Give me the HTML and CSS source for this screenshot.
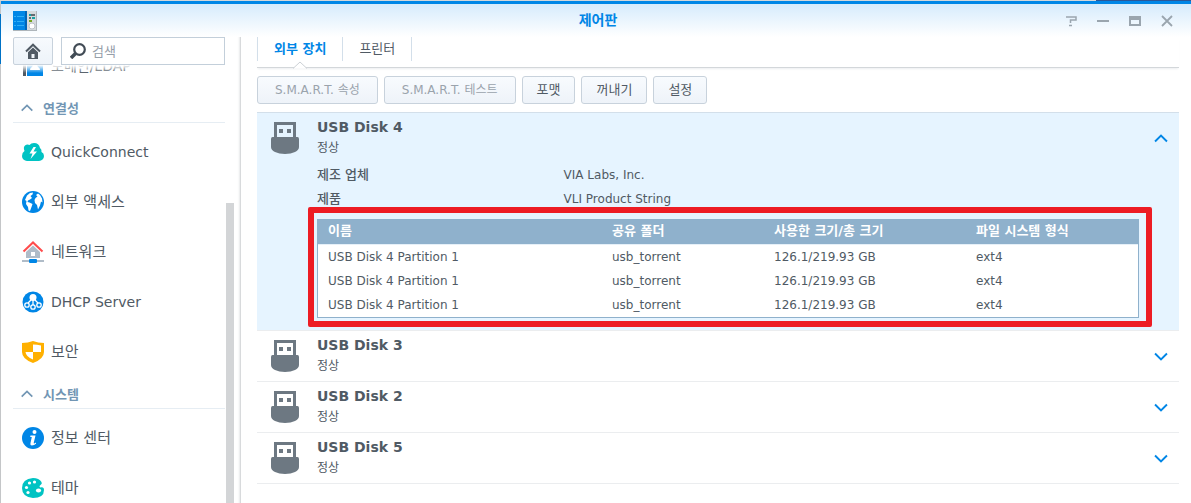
FILE: index.html
```
<!DOCTYPE html>
<html lang="ko">
<head>
    <meta charset="UTF-8">
    <meta name="viewport" content="width=device-width, initial-scale=1.0">
    <title>제어판</title>
    <link rel="stylesheet" href="styles.css">
</head>
<body>
    <!-- shared icons -->
    <svg class="sprite" aria-hidden="true">
        <symbol id="usb" viewBox="0 0 28 32">
            <path fill="#6d7882" fill-rule="evenodd" d="M3 0h22v15h1.500Q28 15 28 17v8q0 3-4 5-4 2-10 2T4 30Q0 28 0 25v-8q0-2 1.500-2H3zM6 3v12h16V3z"/>
            <path fill="#6d7882" d="M8 7h4v4H8zM16 7h4v4h-4z"/>
        </symbol>
        <symbol id="up" viewBox="0 0 12 8"><path fill="none" stroke="currentColor" stroke-width="1.700" d="M.7 6.700 6 1.500l5.300 5.200"/></symbol>
        <symbol id="down" viewBox="0 0 12 8"><path fill="none" stroke="currentColor" stroke-width="1.700" d="M.7 1.300 6 6.500l5.300-5.200"/></symbol>
    </svg>

    <div class="window">
        <header class="titlebar">
            <svg class="app-icon" width="24" height="20" viewBox="0 0 24 20">
                <path fill="#0086e6" d="M0 0h14v20H0z"/>
                <path fill="#0066b8" d="M12 0h2v20h-2z"/>
                <path fill="#d5dadd" d="M14 0h10v20H14z"/>
                <path fill="#aeb5ba" d="M0 19h24v1H0zM23 0h1v20h-1z"/>
                <path stroke="#30aef5" d="M1 5.500h2M4 5.500h7M1 10.500h2M4 10.500h7M1 14.500h2M4 14.500h7"/>
                <path stroke="#3e464d" stroke-width="1.500" d="M16 4h6M16 7h2M19 7h3M16 10h3"/>
                <path stroke="#7ab800" stroke-width="1.500" d="M16 10h3"/>
                <path stroke="#00b4b4" stroke-width="1.500" d="M16 4h2M19 7h3"/>
                <circle cx="19" cy="15" r="3" fill="#fff" stroke="#bcc3c8"/>
            </svg>
            <h1>제어판</h1>
            <div class="controls">
                <button type="button" aria-label="도움말"><svg width="12" height="12" viewBox="0 0 12 12"><path fill="none" stroke="#9aa5ae" stroke-width="1.500" d="M1 2h10v3H5.500v3M4 10.500h3"/></svg></button>
                <button type="button" aria-label="최소화"><svg width="12" height="12" viewBox="0 0 12 12"><path stroke="#9aa5ae" stroke-width="2" d="M0 6h12"/></svg></button>
                <button type="button" aria-label="최대화"><svg width="12" height="12" viewBox="0 0 12 12"><path fill="#9aa5ae" fill-rule="evenodd" d="M0 1h12v10H0zM2 5v4h8V5z"/></svg></button>
                <button type="button" aria-label="닫기"><svg width="12" height="12" viewBox="0 0 12 12"><path stroke="#9aa5ae" stroke-width="1.800" d="m1 1 10 10M11 1 1 11"/></svg></button>
            </div>
        </header>

        <div class="body">
            <aside class="sidebar">
                <div class="search-row">
                    <button type="button" class="home" aria-label="홈">
                        <svg width="16" height="16" viewBox="0 0 16 16"><path fill="none" stroke="#505a64" stroke-width="2" d="M1 8.500 8 1.700l7 6.800"/><path fill="#505a64" fill-rule="evenodd" d="m8 4.500 5 4.800V16H3V9.300zM6.500 11v4h3v-4z"/></svg>
                    </button>
                    <label class="search">
                        <svg width="16" height="16" viewBox="0 0 16 16"><circle cx="9.500" cy="6.500" r="5.300" fill="none" stroke="#414b55" stroke-width="2.200"/><path stroke="#414b55" stroke-width="3.500" d="m5.500 10.500-4.500 4.500"/></svg>
                        <input type="text" placeholder="검색" aria-label="검색">
                    </label>
                </div>

                <nav class="menu">
                    <div class="menu-list">
                        <a href="#" class="item">
                            <svg width="22" height="22" viewBox="0 0 22 22"><path fill="#505a64" d="M1 1h3v20H1z"/><path fill="#0086e6" d="M5 1h16v20H5z"/><path fill="#fff" d="M13 4a3.500 3.500 0 0 1 2 6l1 2q2 .5 2 3H8q0-2.500 2-3l1-2a3.500 3.500 0 0 1 2-6z"/></svg>
                            도메인/LDAP
                        </a>
                        <button type="button" class="group"><svg width="12" height="8"><use href="#up"/></svg>연결성</button>
                        <a href="#" class="item">
                            <svg width="22" height="22" viewBox="0 0 22 22"><path fill="#00c3c3" d="M5 20a5 5 0 0 1-5-5q0-3.500 2.500-5Q1 6 3 4.500 5 3 7.500 4 9 2 12 2q5 0 6 5 2 1.500 1.500 4Q22 12 22 15a5 5 0 0 1-5 5z"/><path fill="#fff" d="m11.500 6-4 6.500h3L8.500 18l6.500-7.500h-3.500L14 6z"/></svg>
                            QuickConnect
                        </a>
                        <a href="#" class="item ko">
                            <svg width="22" height="22" viewBox="0 0 22 22"><circle cx="11" cy="11" r="11" fill="#0086e6"/><path fill="#fff" d="M5 4.500 8 2l3-.5-.5 2L8.500 5l1.500 2-2 1.500-2 1L5.500 11l2 .5 3 1.500-1 3-1.500 4-1.500-.5L6 16l-2-3 .5-3L3 9zM13.500 7l2-1.500L14 4l2-1.500 2 1.500 2 3.500.5 4-1.500-1-1 4-2 4-1-4.500-2-2-.5-3z"/></svg>
                            외부 액세스
                        </a>
                        <a href="#" class="item ko">
                            <svg width="22" height="22" viewBox="0 0 22 22"><path fill="#b0bcc8" fill-rule="evenodd" d="m11 4.500 7 6.500v6H4v-6zM9 11v4h4v-4z"/><path fill="none" stroke="#ff4c4c" stroke-width="2" d="m1.500 10.500 9.500-9 9.500 9"/><path stroke="#b0bcc8" stroke-width="2" d="M0 20h22"/><rect x="7" y="18" width="8" height="4" rx="1" fill="#0086e6"/></svg>
                            네트워크
                        </a>
                        <a href="#" class="item">
                            <svg width="22" height="22" viewBox="0 0 22 22"><circle cx="11" cy="11" r="10.500" fill="#0086e6"/><circle cx="11" cy="6.500" r="3.500" fill="#fff"/><g fill="none" stroke="#fff" stroke-width="1.300"><path d="M11 9v5M9 9l-3 3M13 9l3 3"/><circle cx="5" cy="14" r="2.200"/><circle cx="11" cy="16" r="2.200"/><circle cx="17" cy="14" r="2.200"/></g></svg>
                            DHCP Server
                        </a>
                        <a href="#" class="item ko">
                            <svg width="22" height="22" viewBox="0 0 22 22"><path fill="#ffb000" d="M0 2q6 0 11-2 5 2 11 2v9q0 7-11 11Q0 18 0 11z"/><path fill="#fff" d="M11 3.500q4 0 8 1v6.500h-8zM11 11v7.500Q4 16 3.500 11z"/></svg>
                            보안
                        </a>
                        <button type="button" class="group"><svg width="12" height="8"><use href="#up"/></svg>시스템</button>
                        <a href="#" class="item ko">
                            <svg width="22" height="22" viewBox="0 0 22 22"><circle cx="11" cy="11" r="11" fill="#0086e6"/><circle cx="12.500" cy="5" r="2" fill="#fff"/><path fill="#fff" d="M8.500 8.500h5L11.700 16q0 1 2.300-.5v1.300Q12 18.500 10 18.500 8 18.500 8.500 16l1.300-6H8.200z"/></svg>
                            정보 센터
                        </a>
                        <a href="#" class="item ko">
                            <svg width="22" height="22" viewBox="0 0 22 22"><path fill="#00c3c3" d="M11 1q6 0 8.500 4 1 2-1 3-2 1.500 0 2.500 3.500-1 3.500 2.500 0 8-11 8Q0 20 0 11 0 2 11 1z"/><g fill="#fff"><circle cx="7.500" cy="6" r="1.600"/><circle cx="12.500" cy="5" r="1.600"/><circle cx="4.500" cy="10.500" r="1.600"/><circle cx="6" cy="15.500" r="1.600"/><ellipse cx="16.500" cy="13.500" rx="2.600" ry="2"/></g></svg>
                            테마
                        </a>
                    </div>
                    <div class="thumb"></div>
                </nav>
            </aside>

            <main class="content">
                <div class="tabs" role="tablist">
                    <button type="button" role="tab" class="tab active" aria-selected="true">외부 장치
                        <svg class="notch" width="14" height="8" viewBox="0 0 14 8"><path fill="#fff" stroke="#ccd1d5" d="M0 7.500 7 1l7 6.500"/></svg>
                    </button>
                    <button type="button" role="tab" class="tab" aria-selected="false">프린터</button>
                </div>

                <div class="toolbar">
                    <button type="button" class="btn off" disabled>S.M.A.R.T. 속성</button>
                    <button type="button" class="btn off" disabled>S.M.A.R.T. 테스트</button>
                    <button type="button" class="btn">포맷</button>
                    <button type="button" class="btn">꺼내기</button>
                    <button type="button" class="btn">설정</button>
                </div>

                <div class="disks">
                    <section class="disk open">
                        <div class="disk-head">
                            <svg class="usb" width="28" height="32"><use href="#usb"/></svg>
                            <div class="disk-name">
                                <h2>USB Disk 4</h2>
                                <p>정상</p>
                            </div>
                            <button type="button" class="toggle" aria-label="접기"><svg width="14" height="9"><use href="#up"/></svg></button>
                        </div>
                        <div class="disk-info">
                            <dl>
                                <dt>제조 업체</dt><dd>VIA Labs, Inc.</dd>
                                <dt>제품</dt><dd>VLI Product String</dd>
                            </dl>
                            <div class="marked">
                                <table>
                                    <thead>
                                        <tr><th class="c-name">이름</th><th class="c-folder">공유 폴더</th><th class="c-size">사용한 크기/총 크기</th><th>파일 시스템 형식</th></tr>
                                    </thead>
                                    <tbody>
                                        <tr><td>USB Disk 4 Partition 1</td><td>usb_torrent</td><td>126.1/219.93 GB</td><td>ext4</td></tr>
                                        <tr><td>USB Disk 4 Partition 1</td><td>usb_torrent</td><td>126.1/219.93 GB</td><td>ext4</td></tr>
                                        <tr><td>USB Disk 4 Partition 1</td><td>usb_torrent</td><td>126.1/219.93 GB</td><td>ext4</td></tr>
                                    </tbody>
                                </table>
                            </div>
                        </div>
                    </section>
                    <section class="disk">
                        <div class="disk-head">
                            <svg class="usb" width="28" height="32"><use href="#usb"/></svg>
                            <div class="disk-name">
                                <h2>USB Disk 3</h2>
                                <p>정상</p>
                            </div>
                            <button type="button" class="toggle" aria-label="펼치기"><svg width="14" height="9"><use href="#down"/></svg></button>
                        </div>
                    </section>
                    <section class="disk">
                        <div class="disk-head">
                            <svg class="usb" width="28" height="32"><use href="#usb"/></svg>
                            <div class="disk-name">
                                <h2>USB Disk 2</h2>
                                <p>정상</p>
                            </div>
                            <button type="button" class="toggle" aria-label="펼치기"><svg width="14" height="9"><use href="#down"/></svg></button>
                        </div>
                    </section>
                    <section class="disk">
                        <div class="disk-head">
                            <svg class="usb" width="28" height="32"><use href="#usb"/></svg>
                            <div class="disk-name">
                                <h2>USB Disk 5</h2>
                                <p>정상</p>
                            </div>
                            <button type="button" class="toggle" aria-label="펼치기"><svg width="14" height="9"><use href="#down"/></svg></button>
                        </div>
                    </section>
                </div>
            </main>
        </div>
    </div>
</body>
</html>
```
FILE: styles.css
```
*{margin: 0; padding: 0; box-sizing: border-box;}
body{height: 100vh; overflow: hidden; padding: 1px 0 0 1px; font-family: "DejaVu Sans", "Noto Sans CJK KR", sans-serif; font-size: 12px; color: #505a64; background: linear-gradient(#0072c6, #0072c6) 0 14px / 1px 50px no-repeat, linear-gradient(90deg, #d3d7da 92%, #2b5797 92%) 0 0 / 100% 1px no-repeat, #c4c6c8;}
button, input{font: inherit; color: inherit; border: none; background: none;}
button{cursor: pointer;}
svg{display: block; flex-shrink: 0;}
.sprite{position: absolute; width: 0; height: 0;}

.window{height: 100%; display: flex; flex-direction: column; background-color: #fff; border-top: 3px solid #0086e6;}

.titlebar{height: 33px; flex-shrink: 0; display: grid; grid-template-columns: 1fr auto 1fr; align-items: center; padding: 0 8px 0 12px; background: linear-gradient(#d6ebfc, #fff);}
.titlebar h1{font-size: 14px; line-height: 20px; padding-bottom: 2px; color: #0086e6;}
.controls{display: flex; justify-content: flex-end;}
.controls button{width: 32px; height: 24px; display: flex; justify-content: center; align-items: center;}

.body{flex: 1; min-height: 0; display: flex;}

.sidebar{width: 240px; flex-shrink: 0; display: flex; flex-direction: column; border-right: 1px solid #d8dadc; box-shadow: inset -3px 0 2px -2px #e8eaeb;}
.search-row{display: flex; gap: 8px; padding: 0 15px 0 12px;}
.home{width: 40px; height: 28px; display: flex; justify-content: center; align-items: center; border: 1px solid #c8d2dc; border-radius: 2px; background: linear-gradient(#f7fafd, #edf3f9);}
.search{flex: 1; min-width: 0; height: 28px; display: flex; align-items: center; gap: 6px; padding: 0 8px; border: 1px solid #c3cfda;}
.search input{flex: 1; min-width: 0; font-size: 13px; outline: none;}
.search input::placeholder{color: #96a0aa; opacity: 1;}

.menu{flex: 1; min-height: 0; position: relative; overflow: hidden;}
.menu::before{content: ""; position: absolute; top: 0; left: 0; width: 225px; height: 8px; background: linear-gradient(#fff, rgba(255, 255, 255, 0));}
/* list is scrolled, first entry is partly hidden */
.menu-list{margin: -24px 15px 0 12px;}
.item{height: 50px; display: flex; align-items: center; gap: 7px; padding-left: 9px; font-size: 14px; line-height: 20px; color: #505a64; text-decoration: none;}
.item.ko{font-size: 15px;}
.group{width: 100%; height: 32px; margin-bottom: 4px; display: flex; align-items: center; gap: 10px; padding: 2px 0 0 8px; border-bottom: 1px solid #e6edf3; font-size: 13px; font-weight: bold; color: #7296b4;}
.thumb{position: absolute; top: 138px; right: 6px; bottom: 0; width: 8px; background-color: #d3d5d7;}

.content{flex: 1; min-width: 0; padding: 0 12px 0 16px;}
.tabs{display: flex; padding-bottom: 6px; border-bottom: 1px solid #d3d7da; box-shadow: 0 2px 2px -1px #eceef0;}
.tab{position: relative; height: 24px; padding: 0 16px; border-right: 1px solid #d3dfea; font-size: 13px; line-height: 22px;}
.tab:first-child{border-left: 1px solid #d3dfea;}
.tab.active{font-weight: bold; color: #0086e6;}
.notch{position: absolute; left: calc(50% - 7px); top: 24px;}

.toolbar{display: flex; gap: 6px; padding: 8px 0;}
.btn{height: 28px; padding: 0 14px; border: 1px solid #c8d2dc; border-radius: 3px; background: linear-gradient(#f8fbfe, #eef3f9); font-size: 13px; line-height: 24px; white-space: nowrap;}
.btn.off{padding: 0 17px; font-size: 12px; color: #9aa3ac; cursor: default;}

.disks{border-top: 1px solid #d3dfea;}
.disk{border-bottom: 1px solid #ebedef;}
.disk.open{background-color: #e6f4ff;}
.disk-head{display: flex; align-items: center; gap: 18px; height: 50px; padding: 0 11px 0 14px;}
.disk-name{flex: 1;}
.disk-name h2{font-size: 14px; line-height: 20px;}
.disk-name p{font-size: 12px; line-height: 22px;}
.toggle{color: #0086e6;}
.disk-info{padding: 0 40px 12px 60px;}
.disk-info dl{display: grid; grid-template-columns: 30% 1fr; line-height: 24px;}
.disk-info dt{font-size: 13px; font-weight: 500;}

/* red frame around the partition table */
.marked{position: relative; margin-top: 8px;}
.marked::after{content: ""; position: absolute; top: -12px; right: -13px; bottom: -9px; left: -9px; border: 6px solid #ed1c24; border-radius: 2px; pointer-events: none;}

table{width: 100%; table-layout: fixed; border: 1px solid #8fb1cc; border-spacing: 0; background-color: #fff;}
th, td{padding: 0 10px; text-align: left; white-space: nowrap;}
th{height: 25px; line-height: 22px; padding-bottom: 2px; font-size: 13px; color: #fff; background-color: #8fb1cc; border-bottom: 1px solid #e6f0f8;}
td{height: 24px; line-height: 24px;}
.c-name{width: 284px;}
.c-folder{width: 162px;}
.c-size{width: 202px;}
```
